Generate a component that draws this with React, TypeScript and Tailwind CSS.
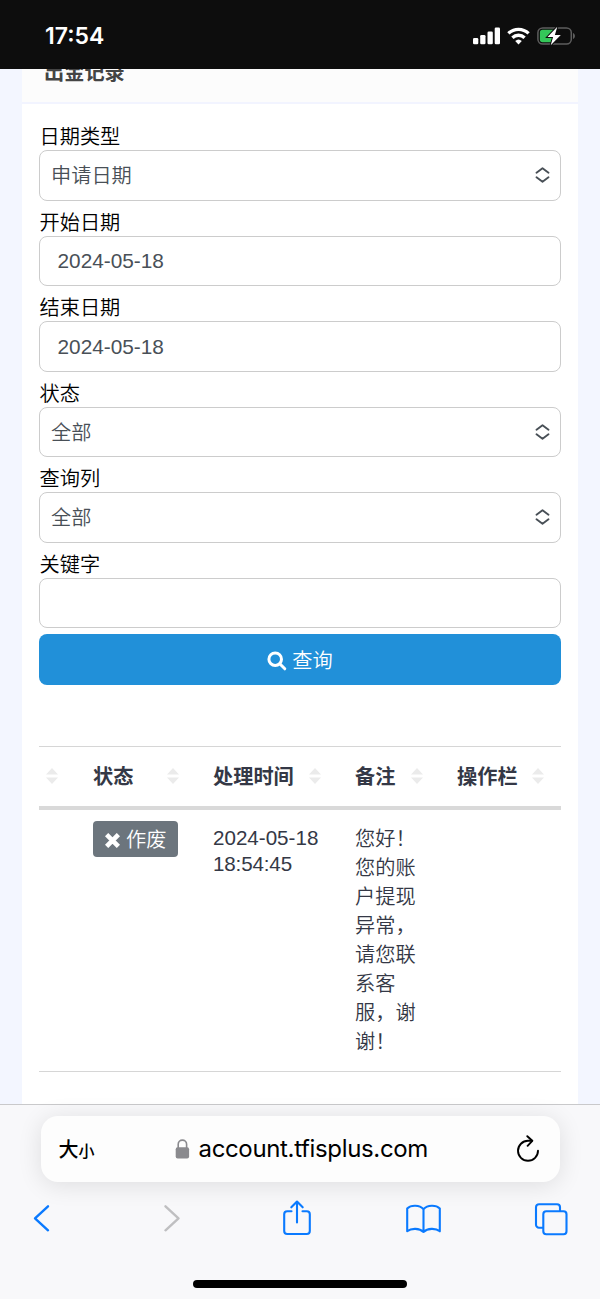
import type { ReactNode } from "react";

const SANS = "font-['Liberation_Sans','Noto_Sans_CJK_SC',sans-serif]";

type Field = {
    label: string;
    value: string;
    kind: "select" | "date" | "text";
};

const FIELDS: Field[] = [
    { label: "日期类型", value: "申请日期", kind: "select" },
    { label: "开始日期", value: "2024-05-18", kind: "date" },
    { label: "结束日期", value: "2024-05-18", kind: "date" },
    { label: "状态", value: "全部", kind: "select" },
    { label: "查询列", value: "全部", kind: "select" },
    { label: "关键字", value: "", kind: "text" },
];

const COLUMNS = ["", "状态", "处理时间", "备注", "操作栏"];

function StatusBar() {
    return (
        <header className="flex h-[69px] shrink-0 items-start bg-[#0d0d0d] pl-[45px] text-white">
            <span className="mt-[21px] font-['Inter',sans-serif] text-[23px] leading-[30px] font-semibold">17:54</span>
            <div className="mt-[26px] mr-[24px] ml-auto flex">
                <svg width="28" height="20" viewBox="0 0 28 20" fill="currentColor">
                    <rect x="0" y="12" width="5.3" height="6.3" rx="1.3" />
                    <rect x="7.2" y="9" width="5.3" height="9.3" rx="1.3" />
                    <rect x="14.5" y="5.4" width="5.3" height="12.9" rx="1.3" />
                    <rect x="21.7" y="1.4" width="5.3" height="16.9" rx="1.3" />
                </svg>
                <svg className="ml-[6px]" width="24" height="20" viewBox="0 0 24 20" fill="none" stroke="currentColor" strokeWidth="3.3">
                    <path d="M1.4 7.4a14.6 14.6 0 0 1 20.2 0" />
                    <path d="M5.4 11.7a8.8 8.8 0 0 1 12.2 0" />
                    <path d="M11.5 18.4L8.2 15a4.8 4.8 0 0 1 6.6 0z" fill="currentColor" stroke="none" />
                </svg>
                <svg className="ml-[6px]" width="39" height="20" viewBox="0 0 39 20">
                    <rect x="0.9" y="1.9" width="33.4" height="16.2" rx="4.8" fill="none" stroke="#5d5d5d" strokeWidth="1.5" />
                    <path d="M36 7v6c2.6-.9 2.6-5.1 0-6z" fill="#5d5d5d" />
                    <path d="M5.600 3.800H16v12.400H5.600a2.700 2.700 0 0 1-2.700-2.700v-7a2.700 2.700 0 0 1 2.700-2.700z" fill="#34c759" />
                    <path d="M20.300.8L10.500 11h5.600l-2.400 8.200L23.800 9h-5.900z" fill="#fff" stroke="#0d0d0d" strokeWidth="2" paintOrder="stroke" />
                </svg>
            </div>
        </header>
    );
}

function FormField({ field }: { field: Field }) {
    return (
        <div className="mb-[6px]">
            <label className="block h-[29px] pt-px pl-[0.5px] text-[20.2px] leading-[30px] font-[350] text-black">{field.label}</label>
            <div className={`flex h-[50.5px] items-center justify-between rounded-[8px] border-[1.5px] border-[#cccccc] bg-white pr-[10px] font-[350] text-[#495057] ${field.kind === "date" ? "pl-[17.5px] text-[20.8px]" : "pl-[11px] text-[20.2px]"}`}>
                <span className={field.kind === "select" ? "pt-[2px]" : ""}>{field.value}</span>
                {field.kind === "select" && (
                    <svg width="15" height="18" viewBox="0 0 15 18" fill="none" stroke="#495057" strokeWidth="1.9" strokeLinecap="round" strokeLinejoin="round">
                        <path d="M1.5 6.700l6-4.400 6 4.400M1.500 11.300l6 4.400 6-4.400" />
                    </svg>
                )}
            </div>
        </div>
    );
}

function RecordTable() {
    return (
        <table className="mt-[61px] w-[522px] table-fixed border-collapse text-[#343846]">
            <colgroup>
                <col className="w-[42px]" />
                <col className="w-[120px]" />
                <col className="w-[142px]" />
                <col className="w-[102px]" />
                <col className="w-[116px]" />
            </colgroup>
            <thead>
                <tr className="h-[61px] border-t border-b-[4px] border-t-[#d6d6d6] border-b-[#d9d9d9]">
                    {COLUMNS.map((name, i) => (
                        <th key={i} className={`p-0 text-left text-[20.2px] font-bold ${i === 0 ? "pl-[7px]" : "pl-[12px]"} ${i === 4 ? "pr-[17px]" : "pr-[22px]"}`}>
                            <div className="flex items-center justify-between whitespace-nowrap">
                                {name && <span className="pt-[2px]">{name}</span>}
                                <svg width="12" height="16" viewBox="0 0 12 16" fill="#ebebeb" className="shrink-0">
                                    <path d="M6 0l6 6.600H0zM6 16L0 9.400h12z" />
                                </svg>
                            </div>
                        </th>
                    ))}
                </tr>
            </thead>
            <tbody>
                <tr className="border-b border-b-[#d6d6d6] align-top font-[350]">
                    <td />
                    <td className="pt-[11.500px] pl-[12px]">
                        <span className="flex h-[36px] w-[85px] items-center rounded-[4px] bg-[#6c757d] pl-[12px] text-[20.2px] text-white">
                            <svg width="15" height="15" viewBox="0 0 15 15" className="mt-[2px] mr-[6px]" stroke="currentColor" strokeWidth="4.600" strokeLinecap="butt">
                                <path d="M1.600 1.600l11.800 11.800M13.400 1.600L1.600 13.400" />
                            </svg>
                            <span className="pt-[2px]">作废</span>
                        </span>
                    </td>
                    <td className="pt-[15px] pl-[12px] text-[20.600px] leading-[26px]">2024-05-18 <span className="tracking-[-0.15px]">18:54:45</span></td>
                    <td className="px-[12px] pt-[15.500px] pb-[13.500px] text-[20.2px] leading-[29px]">
                        您好！您的账户提现异常，请您联系客服，谢谢！
                    </td>
                    <td />
                </tr>
            </tbody>
        </table>
    );
}

function ToolIcon({ className, width, children }: { className: string; width: number; children: ReactNode }) {
    return (
        <svg width={width} height="38" viewBox={`0 0 ${width} 38`} fill="none" stroke="currentColor" strokeWidth="2.1" strokeLinecap="round" strokeLinejoin="round" className={className}>
            {children}
        </svg>
    );
}

function BrowserBar() {
    return (
        <footer className="flex h-[195px] shrink-0 flex-col border-t border-[#c9c9cb] bg-[#f8f8fa]">
            <div className="mt-[11px] ml-[40.5px] flex h-[66px] w-[519px] items-center rounded-[17px] bg-[#fdfdfd] pl-[18px] text-black shadow-[0_3px_24px_rgba(0,0,0,0.11)]">
                <span className="flex w-[116px] items-baseline pt-[2px] font-medium">
                    <span className="text-[20px]">大</span>
                    <span className="text-[16px]">小</span>
                </span>
                <svg width="15" height="20" viewBox="0 0 15 20" fill="none">
                    <rect x="0.7" y="8.300" width="13.400" height="11.200" rx="2" fill="#8a8a8e" />
                    <path d="M3.200 9V5.300a4.200 4.200 0 0 1 8.400 0V9" stroke="#8a8a8e" strokeWidth="1.6" />
                </svg>
                <span className="ml-[9px] font-['Inter',sans-serif] text-[24px] tracking-[-0.35px]">account.tfisplus.com</span>
                <svg width="24" height="28" viewBox="0 0 24 28" fill="none" stroke="currentColor" strokeWidth="1.9" strokeLinecap="round" strokeLinejoin="round" className="mr-[20px] ml-auto">
                    <path d="M15.800 5.800H12A10 10 0 1 0 22 15.800" />
                    <path d="M11.300 1.200l5 4.600-4.700 5" />
                </svg>
            </div>
            <div className="mt-[16.500px] flex text-[#0a7aff]">
                <ToolIcon className="ml-[33px]" width={17}>
                    <path d="M15 7.300L2 19.300l13 12" strokeWidth="2.4" />
                </ToolIcon>
                <ToolIcon className="ml-[113px] text-[#bfbfc1]" width={17}>
                    <path d="M2.500 7.300l13 12-13 12" strokeWidth="2.4" />
                </ToolIcon>
                <ToolIcon className="ml-[102px]" width={30}>
                    <path d="M9.500 12.200H5.200a3 3 0 0 0-3 3V32a3 3 0 0 0 3 3h19.600a3 3 0 0 0 3-3V15.200a3 3 0 0 0-3-3h-4.300" />
                    <path d="M15 23.500V2.800M9.300 8.300L15 2.600l5.700 5.700" />
                </ToolIcon>
                <ToolIcon className="ml-[93px]" width={37}>
                    <path d="M18.500 10.200C14.500 5.700 6 5.600 2.200 9.500V32.300c4-3.300 12.300-3.300 16.300.7 4-4 12.300-4 16.300-.7V9.500c-3.800-3.900-12.300-3.800-16.300.7zV33" />
                </ToolIcon>
                <ToolIcon className="ml-[92px]" width={34}>
                    <path d="M8.500 28.700H5a3 3 0 0 1-3-3V8.200a3 3 0 0 1 3-3h18a3 3 0 0 1 3 3v3.500" />
                    <rect x="9.300" y="12.200" width="23.200" height="23" rx="3" />
                </ToolIcon>
            </div>
            <div className="mt-auto mb-[11.500px] ml-[193px] h-[7.500px] w-[214px] rounded-full bg-black" />
        </footer>
    );
}

export default function App() {
    return (
        <div className={`flex h-[1299px] w-[600px] flex-col overflow-hidden bg-[#f3f6ff] ${SANS}`} lang="zh-CN">
            <StatusBar />
            <main className="mx-[22px] flex min-h-0 flex-1 flex-col overflow-hidden bg-white">
                {/* card header, scrolled partly under the status bar */}
                <div className="h-[35px] shrink-0 overflow-hidden border-b-2 border-[#f2f4ff] bg-[#fcfcfc] pl-[22px]">
                    <h1 className="-mt-[11px] text-[20.2px] leading-[30px] font-bold text-[#444444]">出金记录</h1>
                </div>
                <div className="px-[17px] pt-[17px]">
                    {FIELDS.map(field => (
                        <FormField key={field.label} field={field} />
                    ))}
                    <button className="flex h-[51px] w-full items-center justify-center rounded-[8px] bg-[#2190d9] text-[20.2px] font-[350] text-white">
                        <svg width="20" height="20" viewBox="0 0 20 20" fill="none" stroke="currentColor" strokeWidth="3" strokeLinecap="round" className="mt-[3px] mr-[5px]">
                            <circle cx="8.200" cy="8.200" r="6.300" />
                            <path d="M13 13l4.800 4.800" />
                        </svg>
                        <span className="pt-[3px]">查询</span>
                    </button>
                    <RecordTable />
                </div>
            </main>
            <BrowserBar />
        </div>
    );
}
